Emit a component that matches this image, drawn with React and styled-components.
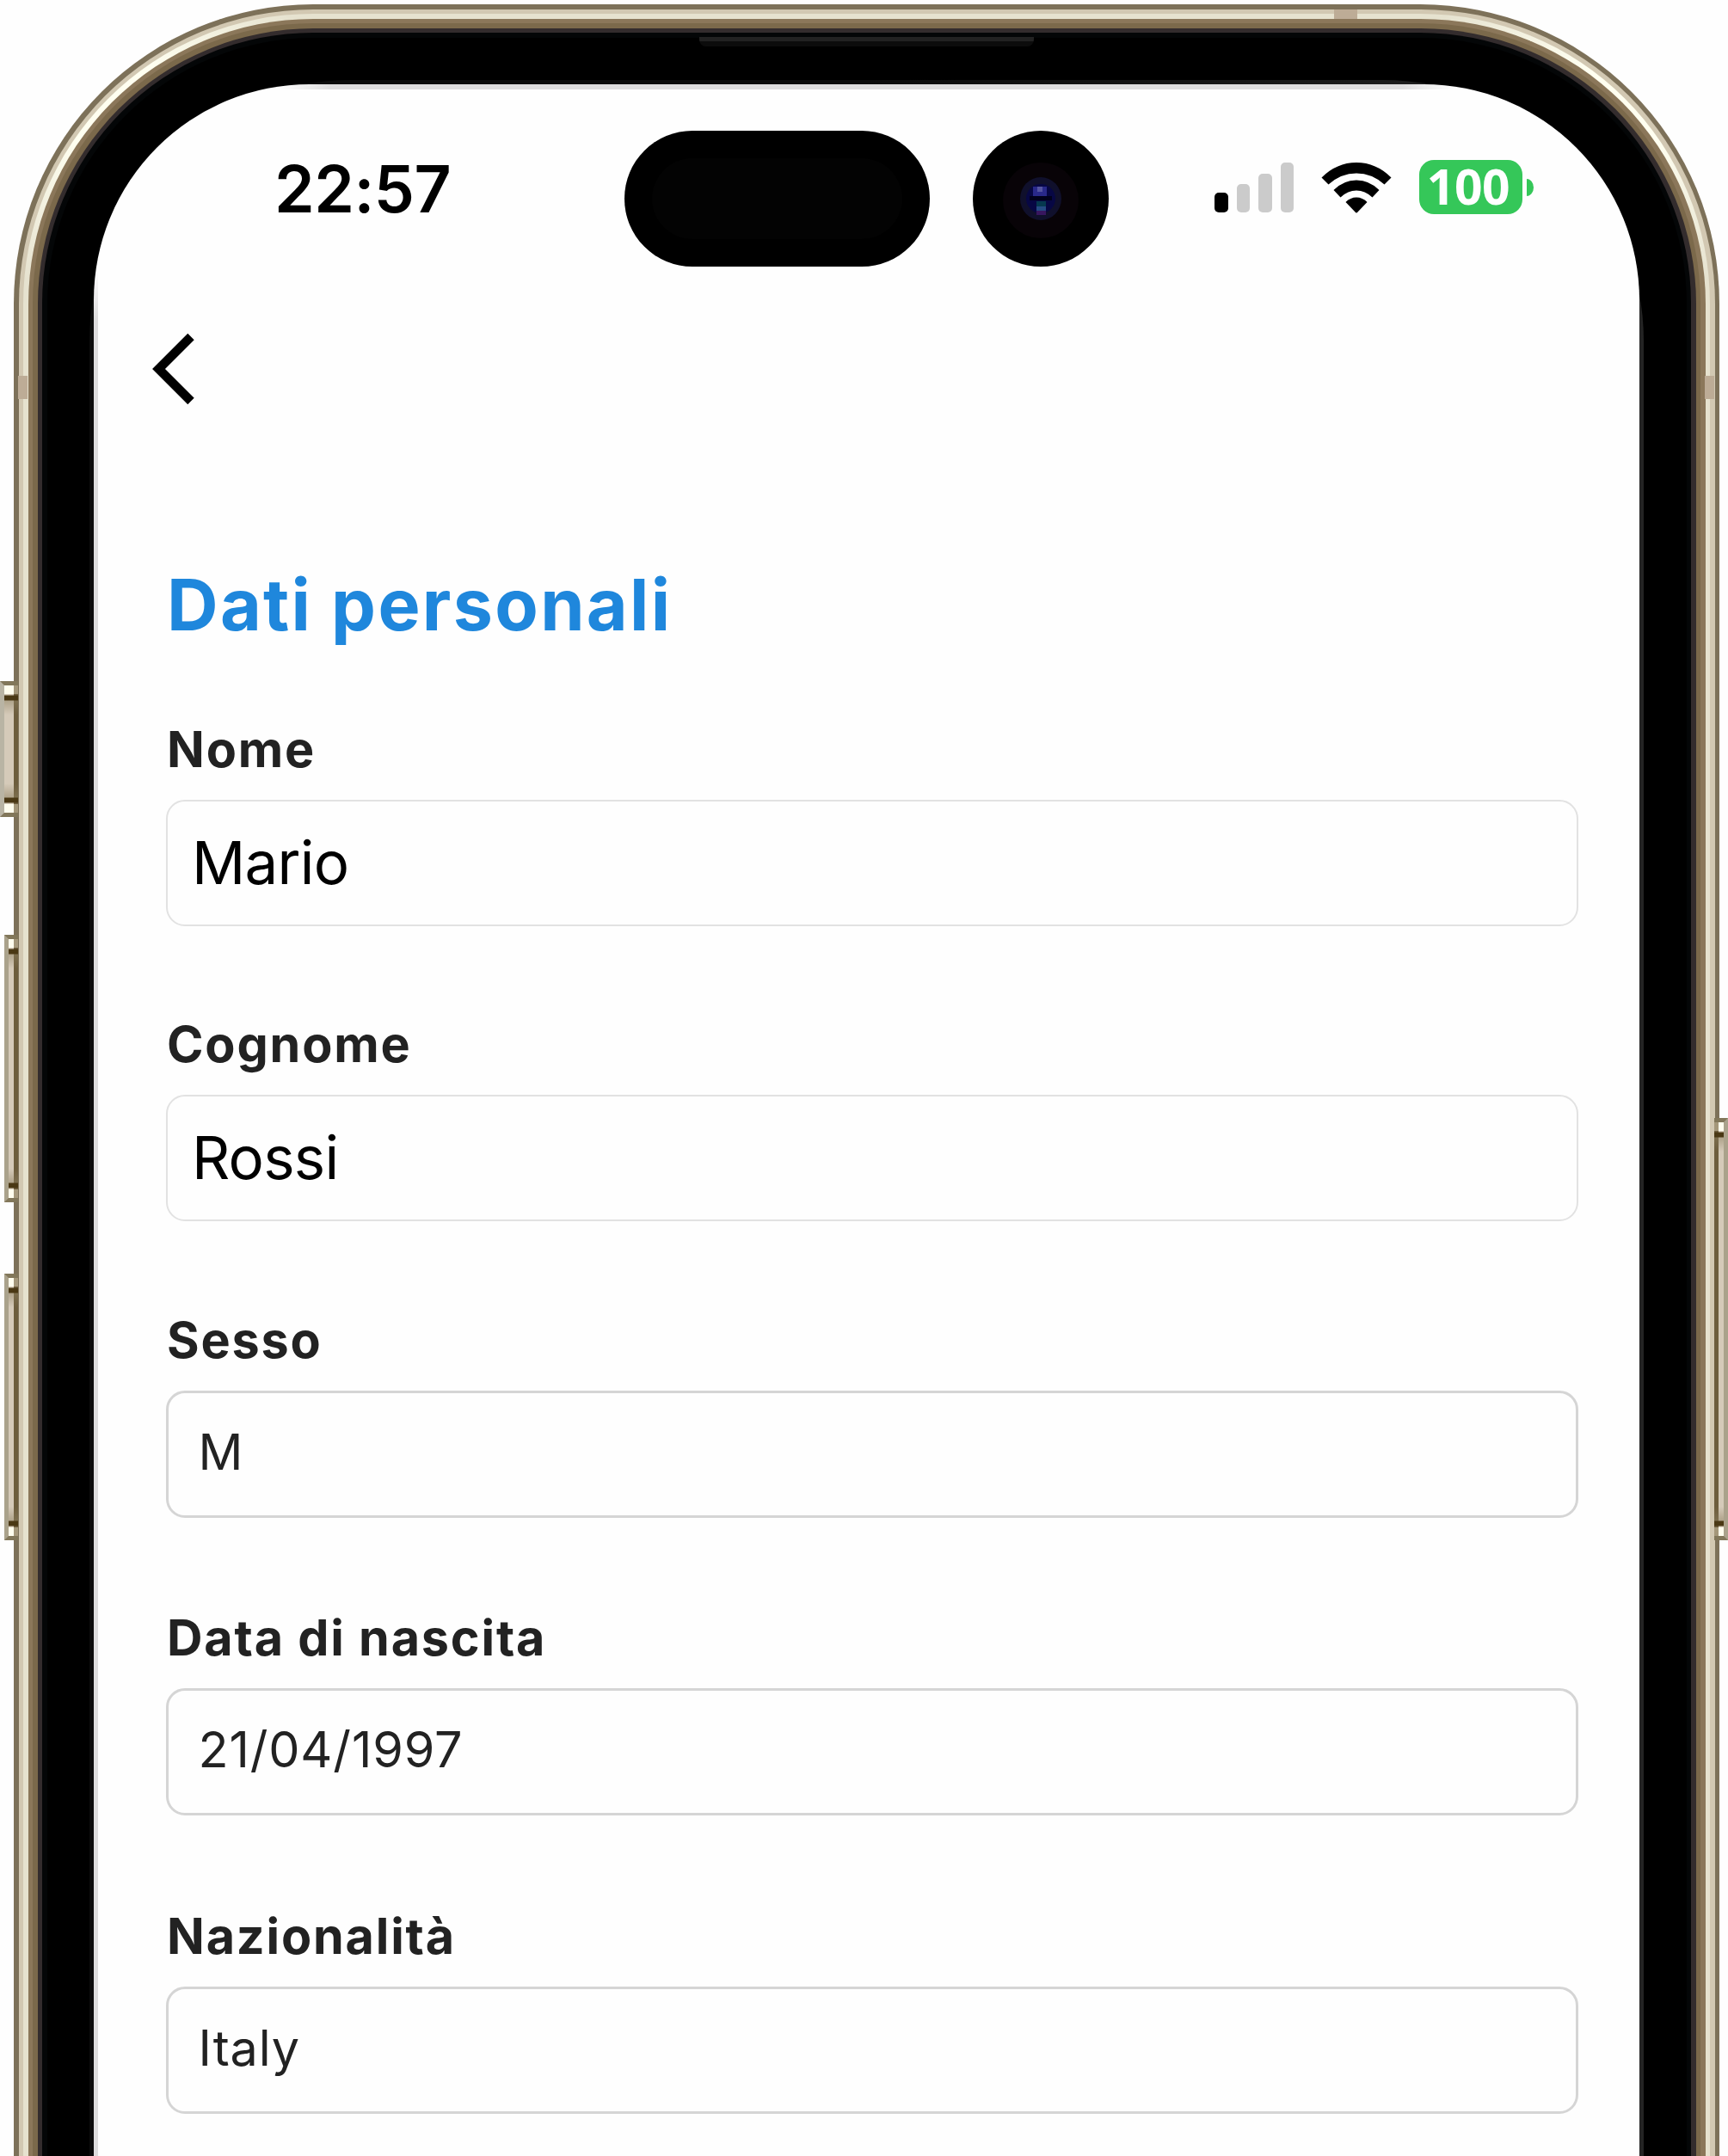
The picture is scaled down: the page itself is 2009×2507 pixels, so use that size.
import React from "react";
import styled, { createGlobalStyle } from "styled-components";

const GlobalStyle = createGlobalStyle`
  *, *::before, *::after { box-sizing: border-box; }
  html, body { margin: 0; background: #fefefe; }
  body { overflow: hidden; font-family: Inter, "Liberation Sans", sans-serif; }
`;

const Stage = styled.main`
  position: relative;
  width: 2009px;
  height: 2507px;
  padding: 5px 10px 0 16px;
  overflow: hidden;
  background: #fefefe;
`;

const Ring = styled.div`
  height: 100%;
  padding: ${(p) => p.$width} ${(p) => p.$width} 0;
  border-radius: ${(p) => p.$radius}px ${(p) => p.$radius}px 0 0;
  background: ${(p) => p.$fill};
`;

const Screen = styled.div`
  height: 100%;
  display: flex;
  flex-direction: column;
  border-radius: 251px 251px 0 0;
  background:
    linear-gradient(90deg, transparent, #dfdedf 60px calc(100% - 60px), transparent) 215px 0 / calc(100% - 430px) 6px no-repeat,
    linear-gradient(transparent, #dddcdd 60px) 0 215px / 5px 100% no-repeat,
    #fefefe;
`;

const SideButton = styled.span`
  position: absolute;
  top: ${(p) => p.$top}px;
  height: ${(p) => p.$height}px;
  ${(p) => (p.$right ? "right: 0; transform: scaleX(-1);" : "left: 0;")}
  width: ${(p) => (p.$right ? 16 : 21)}px;
  padding-left: ${(p) => p.$inset}px;
  display: flex;
  z-index: 1;
`;

const ButtonCap = styled.i`
  flex: 1;
  border: solid #82775a;
  border-width: 5px 0 5px 5px;
  border-left-color: ${(p) => (p.$wide ? "#b9b4a4" : "#aaa28b")};
  background:
    linear-gradient(#fffdee 0 10px, transparent 10px calc(100% - 10px), #fffdee calc(100% - 10px)) 0 0 / ${(p) => (p.$wide ? 11 : 6)}px 100% no-repeat,
    linear-gradient(#a4977a 0 10px, transparent 10px calc(100% - 10px), #a4977a calc(100% - 10px)),
    linear-gradient(transparent 11px, #4a3814 12px 17px, #8b7e5e80 18px, transparent 34px calc(100% - 34px), #8b7e5e80 calc(100% - 18px), #4a3814 calc(100% - 17px) calc(100% - 12px), transparent calc(100% - 11px)),
    linear-gradient(90deg, #d5cab9 0 ${(p) => (p.$wide ? 11 : 6)}px, #6d5d3d 0);
`;

const StatusBar = styled.header`
  position: relative;
  height: 250px;
  display: flex;
  justify-content: space-between;
  padding: 84px 123px 0 210px;
`;

const Clock = styled.time`
  font-size: 75px;
  font-weight: 600;
  line-height: 76px;
  letter-spacing: -0.5px;
  color: #000;
`;

const Indicators = styled.div`
  display: flex;
  align-items: flex-start;
`;

const SignalBars = styled.div`
  display: flex;
  align-items: flex-end;
  gap: 10px;
  height: 58px;
  margin: 7px 32px 0 0;
`;

const Bar = styled.i`
  width: 15.5px;
  height: ${(p) => p.$height}px;
  border-radius: 5px;
  background: ${(p) => (p.$on ? "#000" : "#cbcbcb")};
`;

const Wifi = styled.svg`
  width: 82px;
  height: 60px;
  margin: 6px 32px 0 0;
`;

const Battery = styled.div`
  width: 120px;
  height: 63px;
  margin-top: 4px;
  border-radius: 17px;
  display: flex;
  justify-content: center;
  align-items: center;
  background: #35c759;
  color: #fff;
  font: 700 57px/61px "Noto Sans", sans-serif;
  letter-spacing: -0.5px;
  padding: 0 6px 2px 0;
`;

const BatteryTip = styled.i`
  width: 8px;
  height: 20px;
  margin: 26px 0 0 5px;
  border-radius: 0 8px 8px 0 / 0 10px 10px 0;
  background: #35c759;
`;

const Speaker = styled.i`
  position: absolute;
  top: 43px;
  left: 813px;
  width: 389px;
  height: 11px;
  border-radius: 0 0 8px 8px;
  background: linear-gradient(#222 5px, #0c0c0c 5px);
`;

const AntennaBand = styled.i`
  position: absolute;
  top: ${(p) => p.$top}px;
  left: ${(p) => p.$left}px;
  width: ${(p) => p.$width}px;
  height: ${(p) => p.$height}px;
  background: #bdac96;
`;

const Island = styled.div`
  position: absolute;
  top: 54px;
  left: 617px;
  width: 355px;
  height: 158px;
  border-radius: 79px;
  background: #000;
  padding: 32px;
`;

const IslandCore = styled.div`
  height: 100%;
  border-radius: 50px;
  background: #030303;
`;

const Camera = styled.svg`
  position: absolute;
  top: 54px;
  left: 1022px;
  width: 158px;
  height: 158px;
`;

const NavBar = styled.nav`
  padding: 39px 0 0 68px;
  height: 127px;
`;

const BackIcon = styled.svg`
  display: block;
  width: 50px;
  height: 84px;
`;

const Form = styled.form`
  padding: 183px 71px 0 84px;
  display: flex;
  flex-direction: column;
`;

const Title = styled.h1`
  margin: 0 0 89px;
  padding-left: 1px;
  font-size: 82.5px;
  font-weight: 700;
  line-height: 90px;
  letter-spacing: 2.3px;
  color: #1f87dc;
`;

const Field = styled.label`
  display: flex;
  flex-direction: column;
  height: ${(p) => p.$pitch}px;
`;

const Caption = styled.span`
  height: 93px;
  padding-left: 1px;
  font-size: 57.5px;
  font-weight: 700;
  line-height: 68px;
  letter-spacing: 1.8px;
  color: #222;
`;

const Box = styled.span`
  display: flex;
  align-items: center;
  height: ${(p) => (p.$select ? 148 : 147)}px;
  border: ${(p) => (p.$select ? "3px solid #d5d5d5" : "2px solid #e2e2e2")};
  border-radius: 22px;
  padding: 0 0 ${(p) => (p.$select ? "6px 34.5px" : "2px 28px")};
  font-size: ${(p) => (p.$select ? 57.5 : 69)}px;
  font-weight: 400;
  letter-spacing: ${(p) => (p.$select ? 0.85 : -0.8)}px;
  line-height: 84px;
  color: ${(p) => (p.$select ? "#222" : "#000")};
`;

const goldSheen = (base) => `
  radial-gradient(circle at 102px 102px, #fffff0 60px, transparent 230px),
  radial-gradient(circle at calc(100% - 102px) 102px, #fffff0 60px, transparent 230px),
  ${base}`;

const rings = [
  { width: "5.5px", fill: "#7d7159" },
  { width: "5.5px", fill: "#d2c8b2" },
  { width: "5.5px", fill: goldSheen("#e6e2cf") },
  { width: "5.5px", fill: "#8b775a" },
  { width: "5.5px", fill: "#7b694b" },
  { width: "5.5px", fill: "#332c2d" },
  { width: "5.5px", fill: "#040607" },
  { width: "49.5px", fill: "#000" },
  { width: "5px", fill: "linear-gradient(90deg, #0c0c0c 50%, #242424)" },
];

const fields = [
  { label: "Nome", value: "Mario", pitch: 343 },
  { label: "Cognome", value: "Rossi", pitch: 344 },
  { label: "Sesso", value: "M", pitch: 346, select: true },
  { label: "Data di nascita", value: "21/04/1997", pitch: 347, select: true },
  { label: "Nazionalità", value: "Italy", pitch: 260, select: true },
];

function Bezel({ children }) {
  return rings.reduceRight(
    (inner, ring, i) => (
      <Ring $width={ring.width} $fill={ring.fill} $radius={Math.max(256, 348 - i * 5.5)}>
        {inner}
      </Ring>
    ),
    children
  );
}

function PhoneButton({ top, height, wide, right }) {
  return (
    <SideButton $top={top} $height={height} $right={right} $inset={wide || right ? 0 : 5}>
      <ButtonCap $wide={wide} />
    </SideButton>
  );
}

export default function App() {
  return (
    <>
      <GlobalStyle />
      <Stage>
        <Bezel>
          <Screen>
            <StatusBar>
              <Clock>22:57</Clock>
              <Island>
                <IslandCore />
              </Island>
              <Camera viewBox="0 0 158 158">
                <circle cx="79" cy="79" r="79" fill="#000" />
                <circle cx="79" cy="81" r="44" fill="#080307" />
                <ellipse cx="79" cy="79" rx="24" ry="25" fill="#10102c" />
                <circle cx="79" cy="79" r="17" fill="#070744" />
                <path d="M70 65h16v11H70z" fill="#29298a" />
                <path d="M75 65h6v6h-6z" fill="#5454a0" />
                <path d="M74 82h11v6H74z" fill="#06384f" />
                <path d="M74 88h11v5H74z" fill="#254a83" />
                <path d="M74 93h11v5H74z" fill="#38165f" />
                <path d="M66 76h26v5H66z" fill="#01011c" />
              </Camera>
              <Indicators>
                <SignalBars>
                  <Bar $height={23} $on />
                  <Bar $height={33} />
                  <Bar $height={45} />
                  <Bar $height={58} />
                </SignalBars>
                <Wifi viewBox="0 0 82 60">
                  <path d="M.5 18.500Q18 1 41 1T81.500 18.500L73.500 26.500Q59 13.500 41 13.500T8.500 26.500Z" />
                  <path d="M14.500 33Q26 21.500 41 21.500T67.500 33L59.500 41.500Q51 33.500 41 33.500T22.500 41.500Z" />
                  <path d="M28.500 47Q34 41.500 41 41.500T53.500 47L42.500 58.500Q41 60.500 39.500 58.500Z" />
                </Wifi>
                <Battery>100</Battery>
                <BatteryTip />
              </Indicators>
            </StatusBar>
            <NavBar>
              <BackIcon viewBox="0 0 50 84" fill="none" stroke="#000" strokeWidth="10.500">
                <path d="M45 4.500 7.500 42 45 79.500" />
              </BackIcon>
            </NavBar>
            <Form>
              <Title>Dati personali</Title>
              {fields.map((f) => (
                <Field key={f.label} $pitch={f.pitch}>
                  <Caption>{f.label}</Caption>
                  <Box $select={f.select}>{f.value}</Box>
                </Field>
              ))}
            </Form>
          </Screen>
        </Bezel>
        <Speaker />
        <AntennaBand $top={11} $left={1551} $width={27} $height={11} />
        <AntennaBand $top={437} $left={21} $width={11} $height={27} />
        <AntennaBand $top={437} $left={1982} $width={11} $height={27} />
        <PhoneButton top={792} height={158} wide />
        <PhoneButton top={1087} height={311} />
        <PhoneButton top={1481} height={310} />
        <PhoneButton top={1300} height={491} right />
      </Stage>
    </>
  );
}
